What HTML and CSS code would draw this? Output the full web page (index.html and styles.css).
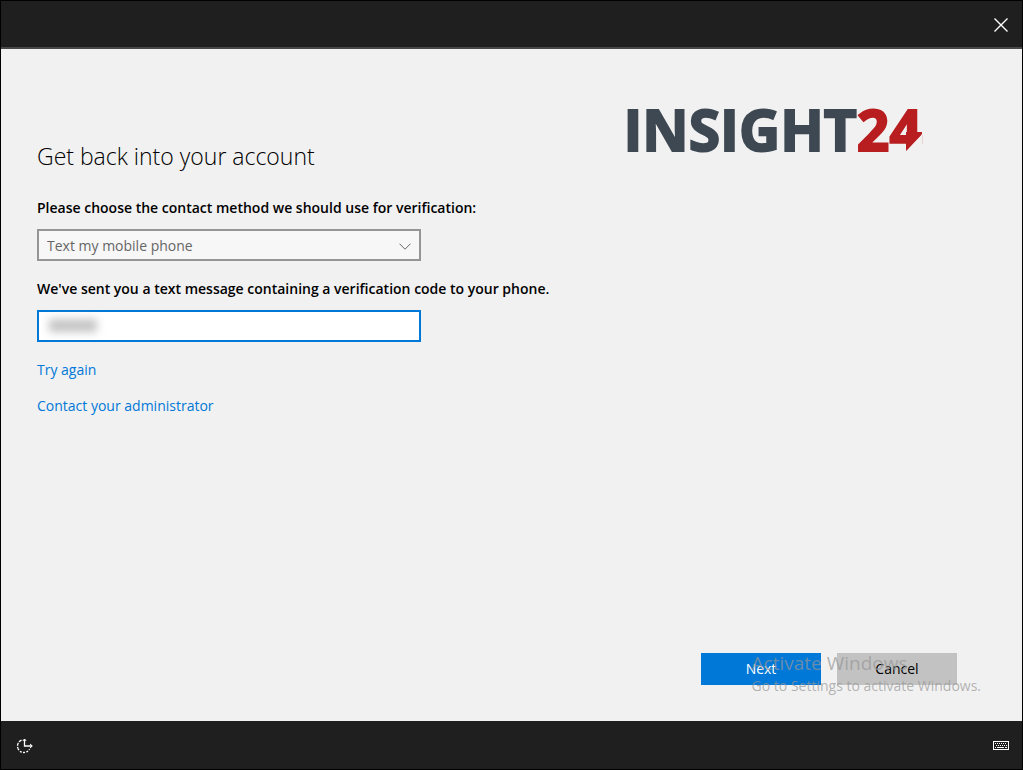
FILE: index.html
```html
<!DOCTYPE html>
<html lang="en">
<head>
  <meta charset="UTF-8">
  <meta name="viewport" content="width=device-width, initial-scale=1.0">
  <title>Get back into your account</title>
  <link rel="stylesheet" href="styles.css">
</head>
<body>
  <header class="titlebar">
    <button type="button" class="icon-button" aria-label="Close">
      <svg width="14" height="14" viewBox="0 0 14 14"><path d="M0.5 0.5 L13.5 13.5 M13.5 0.5 L0.5 13.5" fill="none" stroke="#fff" stroke-width="1.4"/></svg>
    </button>
  </header>

  <main class="page">
    <form class="reset-form">
      <h1>Get back into your account</h1>

      <label for="method">Please choose the contact method we should use for verification:</label>
      <div class="field">
        <select id="method" disabled>
          <option>Text my mobile phone</option>
        </select>
        <svg class="chevron" width="12" height="7" viewBox="0 0 12 7"><path d="M0.5 0.7 L6 6.2 L11.5 0.7" fill="none" stroke="#666"/></svg>
      </div>

      <label for="code">We've sent you a text message containing a verification code to your phone.</label>
      <div class="field">
        <input type="text" id="code" autocomplete="off">
        <span class="masked"></span>
      </div>

      <a href="#">Try again</a>
      <a href="#">Contact your administrator</a>
    </form>

    <div class="logo">
      <span class="logo-name">INSIGHT</span><span class="logo-number">24</span>
      <!-- slanted foot of the 4 -->
      <svg class="logo-tail" width="17" height="22" viewBox="0 0 17 22">
        <path d="M17 3 V22 H0 V20 H1 Z" fill="#f1f1f1"/>
        <path d="M1 1 H17 V3 L1 20 Z" fill="#b81d1f"/>
      </svg>
    </div>

    <div class="actions">
      <button type="button" class="btn btn-primary">Next</button>
      <button type="button" class="btn">Cancel</button>
      <div class="watermark">
        <p class="watermark-title">Activate Windows</p>
        <p>Go to Settings to activate Windows.</p>
      </div>
    </div>
  </main>

  <footer class="taskbar">
    <button type="button" class="icon-button" aria-label="Ease of access">
      <svg width="18" height="16" viewBox="0 0 18 16" fill="none" stroke="#fff">
        <path d="M5.5 2.2 A6.3 6.3 0 0 0 2 10.5" stroke-width="1.3" stroke-dasharray="3 1"/>
        <path d="M2 10.5 A6.3 6.3 0 0 0 13.5 11" stroke-width="1.3" stroke-dasharray="2 1.3"/>
        <path d="M8.5 1 V8 H16" stroke-width="1.3"/>
        <path d="M6.8 3 L8.5 1 L10.2 3 M14 6 L16.3 8 L14 10"/>
      </svg>
    </button>
    <button type="button" class="icon-button" aria-label="On-screen keyboard">
      <svg width="16" height="10" viewBox="0 0 16 10">
        <rect x="0.5" y="0.5" width="15" height="8" fill="none" stroke="#fff"/>
        <path d="M2 2.5 H14 M3 4.5 H14" stroke="#fff" stroke-dasharray="1 1"/>
        <path d="M2 6.5 H3 M4 6.5 H11 M12 6.5 H14" stroke="#fff"/>
      </svg>
    </button>
  </footer>
</body>
</html>
```
FILE: styles.css
```css
* {
    box-sizing: border-box;
}
body {
    display: flex;
    flex-direction: column;
    min-height: 100vh;
    margin: 0;
    border: 1px solid #000;
    background-color: #f1f1f1;
    color: #000;
    font-family: "Segoe UI", "Open Sans", sans-serif;
    font-size: 14px;
    line-height: 20px;
}
.titlebar, .taskbar {
    display: flex;
    align-items: center;
    height: 48px;
    padding: 2px 5px 0 8px;
    background-color: #1f1f1f;
}
.titlebar {
    justify-content: flex-end;
    border-bottom: 2px solid #484848;
}
.taskbar {
    justify-content: space-between;
}
.icon-button {
    display: flex;
    align-items: center;
    justify-content: center;
    width: 32px;
    height: 32px;
    padding: 0;
    border: 0;
    background: none;
}
.page {
    flex: 1;
    display: grid;
    grid-template-columns: 1fr auto;
    grid-template-rows: 1fr auto;
    padding: 36px 65px 36px 36px;
}
.reset-form {
    display: flex;
    flex-direction: column;
    align-items: flex-start;
    padding-top: 55px;
}
h1 {
    margin: 0 0 26px;
    font-size: 23px;
    font-weight: 300;
    line-height: 32px;
}
label {
    margin-bottom: 11px;
    font-weight: 600;
}
.field {
    position: relative;
    width: 384px;
    max-width: 100%;
    margin-bottom: 18px;
}
select, input {
    display: block;
    width: 100%;
    height: 32px;
    padding: 2px 8px 0;
    border: 2px solid #0078d7;
    border-radius: 0;
    outline: none;
    background-color: #fff;
    font: inherit;
}
select {
    appearance: none;
    border-color: #959595;
    background-color: #f7f7f7;
    color: #666;
    opacity: 1;
}
.chevron {
    position: absolute;
    top: 14px;
    right: 10px;
}
.masked {
    position: absolute;
    top: 9px;
    left: 12px;
    width: 48px;
    height: 13px;
    background-color: #c4c4c4;
    filter: blur(4px);
}
a {
    margin-bottom: 16px;
    color: #0078d7;
    text-decoration: none;
}
.logo {
    position: relative;
    align-self: start;
    margin: 14px 35px 0 0;
    font-size: 57px;
    font-weight: 700;
    line-height: 60px;
    white-space: nowrap;
    -webkit-text-stroke: 2px;
}
.logo-name {
    color: #3e4852;
}
.logo-number {
    color: #b81d1f;
}
.logo-tail {
    position: absolute;
    right: 0;
    bottom: 6px;
}
.actions {
    position: relative;
    grid-column: 1 / -1;
    display: flex;
    justify-content: flex-end;
    gap: 16px;
}
.btn {
    width: 120px;
    height: 32px;
    padding: 0;
    border: 0;
    background-color: #c2c2c2;
    color: #000;
    font: inherit;
}
.btn-primary {
    background-color: #0078d7;
    color: #fff;
}
.watermark {
    position: absolute;
    top: -2px;
    right: -24px;
    color: rgba(150, 150, 150, 0.7);
    pointer-events: none;
}
.watermark p {
    margin: 0;
    line-height: 22px;
}
.watermark .watermark-title {
    font-size: 19px;
    line-height: 24px;
}
```
